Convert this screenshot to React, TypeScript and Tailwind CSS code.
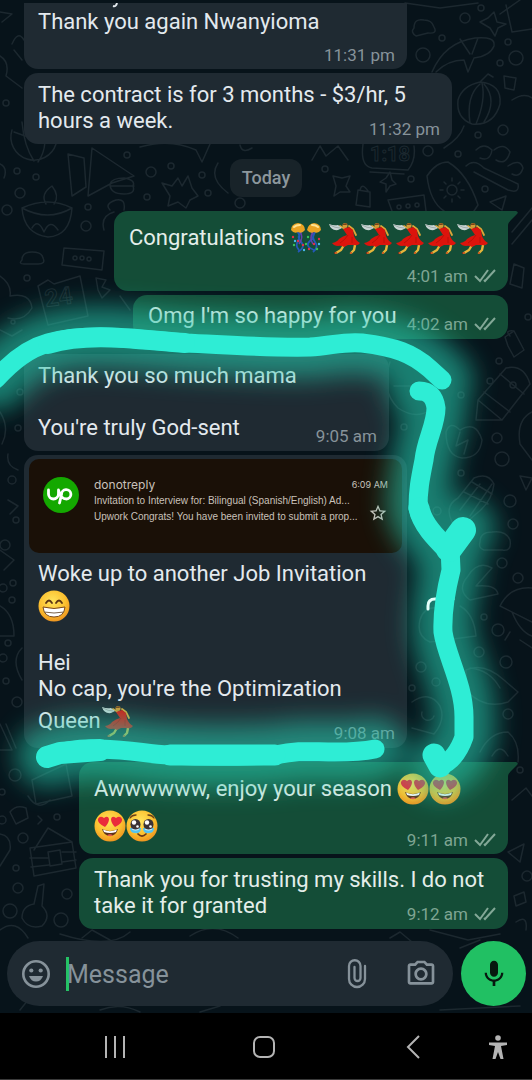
import type { ReactNode } from "react";
import { MdMic, MdOutlinePhotoCamera, MdStarBorder } from "react-icons/md";

function Dancer() {
  return (
    <svg viewBox="0 0 32 32" className="size-8 shrink-0" role="img" aria-label="dancer">
      <path d="M16 23 L13 28 L8 31 M27 23 L26 28 L23 31" fill="none" stroke="#e6b53a" strokeWidth="2.4" strokeLinecap="round" strokeLinejoin="round" />
      <path d="M12 4 L17 7 M21 4 L25 7 L28 13" fill="none" stroke="#dda637" strokeWidth="1.8" strokeLinecap="round" strokeLinejoin="round" />
      <path d="M1 2 Q6 4 10 3 L14 6 L10 8 Q3 9 1 2Z" fill="#c9d5d4" />
      <path d="M2 3 Q7 6 12 6" fill="none" stroke="#94a19e" strokeWidth="0.8" />
      <path d="M15 7 L21 5 L25 8 L26 14 Q28 19 32 21 Q30 24 26 23 L20 23 L16 25 Q13 23 10 24 Q6 24 4 21 Q9 20 11 17 Q15 14 19 13Z" fill="#dc140c" />
      <path d="M20 13 Q17 18 12 21 M24 15 L24 21" fill="none" stroke="#b00f08" strokeWidth="0.8" />
      <circle cx="17" cy="3.6" r="2.5" fill="#d69a35" />
      <path d="M14 3 Q16 0 20 2 L18 3Z" fill="#7a4318" />
      <path d="M6 31 L9 31 M22 31 L24 31" stroke="#b5120c" strokeWidth="1.2" />
    </svg>
  );
}

function Confetti() {
  return (
    <svg viewBox="0 0 32 32" className="size-8 shrink-0" role="img" aria-label="confetti ball">
      <path d="M7 9 Q11 14 8 19 T9 28 M12 9 Q6 15 11 20 T8 30 M21 9 Q26 14 20 19 T24 28 M26 9 Q21 15 25 20 T23 30" fill="none" stroke="#2458b8" strokeWidth="1.8" />
      <path d="M10 10 Q14 15 9 22 M23 10 Q19 16 23 22" fill="none" stroke="#6541a8" strokeWidth="1.6" />
      <path d="M1 8 Q1 2 8 1 Q15 2 15 8 Q12 12 8 10 Q4 12 1 8Z" fill="#eaa323" />
      <path d="M17 8 Q18 2 24 1 Q31 2 31 8 Q28 12 24 10 Q20 12 17 8Z" fill="#eaa323" />
      <path d="M4 5 Q6 3 10 3 M22 3 Q26 3 28 5" fill="none" stroke="#ffe391" strokeWidth="2" strokeLinecap="round" />
      <g fill="#e0304b"><circle cx="3" cy="15" r="1.2" /><circle cx="13" cy="23" r="1.2" /><circle cx="29" cy="17" r="1.2" /><circle cx="19" cy="27" r="1.2" /><circle cx="8" cy="19" r="1.2" /><circle cx="24" cy="22" r="1.2" /></g>
      <g fill="#39c15a"><circle cx="16" cy="22" r="1.2" /><circle cx="4" cy="23" r="1.2" /><circle cx="27" cy="27" r="1.2" /><circle cx="18" cy="15" r="1.2" /></g>
      <g fill="#49b9ea"><circle cx="5" cy="19" r="1.2" /><circle cx="29" cy="22" r="1.2" /><circle cx="14" cy="28" r="1.2" /></g>
    </svg>
  );
}

function Face({ id, label, children }: { id: string; label: string; children: ReactNode }) {
  return (
    <svg viewBox="0 0 32 32" className="size-8 shrink-0" role="img" aria-label={label}>
      <defs>
        <radialGradient id={id} cx="0.45" cy="0.35" r="0.65">
          <stop offset="0" stopColor="#ffe45c" />
          <stop offset="0.65" stopColor="#fbc02f" />
          <stop offset="1" stopColor="#ee9520" />
        </radialGradient>
      </defs>
      <circle cx="16" cy="16" r="15.5" fill={`url(#${id})`} />
      {children}
    </svg>
  );
}

function HeartEyes({ id }: { id: string }) {
  return (
    <Face id={id} label="heart eyes">
      <path d="M11 17 Q3 13 4 9 Q6 5 10 8 Q14 5 15 9 Q15 13 11 17Z" fill="#ea2c3b" />
      <path d="M21 17 Q17 13 17 9 Q18 5 22 8 Q26 5 28 9 Q29 13 21 17Z" fill="#ea2c3b" />
      <path d="M8 19 Q16 23 24 19 Q22 26 16 26 Q10 26 8 19Z" fill="#5f3218" />
      <path d="M9 19.500 Q16 23 23 19.500 L22 22 Q16 24 10 22Z" fill="#fff" />
      <path d="M13 25.500 Q16 23 19 25.500 Q16 27 13 25.500Z" fill="#e75a4e" />
    </Face>
  );
}

function Grin() {
  return (
    <Face id="grin" label="grin">
      <path d="M8 13 Q11 8 14 13 M18 13 Q21 8 24 13" fill="none" stroke="#5b3414" strokeWidth="1.8" strokeLinecap="round" />
      <path d="M5 17 Q16 20 27 17 Q26 27 16 27 Q6 27 5 17Z" fill="#fff" stroke="#7b4a1c" strokeWidth="1" />
      <path d="M6 22 Q16 24 26 22" fill="none" stroke="#7b6249" strokeWidth="1" />
    </Face>
  );
}

function HoldingTears() {
  return (
    <Face id="tears" label="holding back tears">
      <path d="M4 8 Q6 5 10 5 M22 5 Q26 5 28 8" fill="none" stroke="#6b4018" strokeWidth="1.300" strokeLinecap="round" />
      <path d="M4 18 H15 Q15 24 9 23 Q4 23 4 18Z M28 18 H17 Q17 24 23 23 Q28 23 28 18Z" fill="#54c3f0" />
      <ellipse cx="9.500" cy="14.500" rx="5" ry="5.500" fill="#3b3236" />
      <ellipse cx="22.500" cy="14.500" rx="5" ry="5.500" fill="#3b3236" />
      <g fill="#fff"><circle cx="8" cy="12.500" r="2.200" /><circle cx="21" cy="12.500" r="2.200" /><circle cx="11.500" cy="16.500" r="1.300" /><circle cx="24.500" cy="16.500" r="1.300" /></g>
      <path d="M6 19 Q9.500 21 13 19 M19 19 Q22.500 21 26 19" fill="none" stroke="#c7edfb" strokeWidth="1.200" />
      <path d="M12 24 Q16 28 20 24" fill="none" stroke="#6b3715" strokeWidth="1.700" strokeLinecap="round" />
    </Face>
  );
}

function Stamp({ time, read }: { time: string; read?: boolean }) {
  return (
    <div className={read ? "flex h-5 shrink-0 items-center gap-1.5 text-[17px] leading-5 text-[#7fa593]" : "flex h-5 shrink-0 items-center text-[17px] leading-5 text-[#87939a]"}>
      <time>{time}</time>
      {read && (
        <svg viewBox="0 0 22 14" className="h-3.5 w-[22px]" fill="none" stroke="#83a897" strokeWidth="2" role="img" aria-label="delivered">
          <path d="M1 7 L6 12 L14 1 M10 11 L11 12 L21 1" />
        </svg>
      )}
    </div>
  );
}

function Bubble({ mine, tail, className, children }: { mine?: boolean; tail?: boolean; className: string; children: ReactNode }) {
  const side = mine ? "mr-6 self-end bg-[#144d37] pl-[15px] pr-3 text-[#e4eeea]" : "ml-6 self-start bg-[#1f2a32] pl-3.5 pr-3 text-[#e3e9ee]";
  return (
    <li className={`relative flex flex-col text-[22px] leading-[26px] ${side} ${className}`}>
      {tail && (
        <svg viewBox="0 0 10 14" className="absolute -right-2.5 top-0 h-3.5 w-2.5" aria-hidden="true">
          <path d="M0 0 H8 Q11 1 9 3 L3 9 Q0 12 0 14Z" fill="#144d37" />
        </svg>
      )}
      {children}
    </li>
  );
}

function EmojiLine({ children }: { children: ReactNode }) {
  return <div className="flex h-[37px] items-center whitespace-pre">{children}</div>;
}

const dots: [number, number, number][] = [
  [465, 18, 5], [481, 8, 3], [442, 38, 3], [423, 55, 7], [508, 42, 3], [516, 58, 7], [500, 63, 3], [503, 130, 5], [478, 135, 3], [428, 151, 5], [458, 154, 3],
  [17, 171, 3], [36, 177, 3], [20, 193, 5], [127, 155, 3], [151, 172, 5], [171, 166, 3], [147, 197, 3], [202, 175, 3], [208, 193, 3], [240, 203, 5], [325, 169, 3], [411, 179, 3], [485, 189, 3],
  [88, 207, 3], [86, 226, 5], [7, 210, 5], [27, 278, 3], [13, 322, 2], [6, 103, 3], [13, 583, 3], [3, 588, 4], [12, 600, 3], [8, 643, 3], [3, 658, 4], [6, 681, 3], [17, 702, 5], [20, 392, 3], [18, 428, 3],
  [499, 361, 3], [461, 395, 3], [497, 438, 5], [502, 459, 7], [461, 473, 3], [404, 427, 3], [510, 501, 6], [513, 524, 5], [437, 511, 4],
  [502, 563, 5], [518, 578, 5], [484, 617, 3], [498, 630, 6], [479, 652, 5], [506, 662, 6], [421, 667, 5], [436, 682, 4], [412, 688, 3], [508, 714, 5],
  [15, 775, 6], [57, 817, 3], [23, 838, 5], [16, 868, 3], [18, 888, 5], [67, 894, 5], [10, 911, 7], [61, 920, 7], [2, 820, 4], [528, 317, 3], [527, 876, 5], [2, 792, 3],
  [520, 770, 3], [513, 385, 3], [490, 381, 3], [12, 480, 4], [16, 520, 3], [5, 545, 5],
];

const scribbles = [
  "M405 3 L440 8 L478 3 M506 5 L512 32 L532 29 M480 22 L488 18 L494 12 L497 22 L506 24 L498 28 L495 36 L490 28Z",
  "M414 28 Q414 18 424 20 Q432 20 434 27 Q438 34 428 33 L416 36 Q410 32 414 28Z",
  "M432 72 Q445 42 475 38 Q496 36 494 46 Q490 56 474 58 L468 72 L464 60 Q448 60 436 72 M460 39 L470 54 M478 38 L472 54",
  "M480 82 Q502 84 500 104 Q494 126 472 124 Q456 118 458 100 Q462 86 480 82Z M480 84 Q466 96 470 123 M482 83 Q486 100 476 124 M484 84 Q498 100 484 122 M480 82 L488 74 L493 77",
  "M504 76 L516 78 L514 90 L505 88Z M512 100 Q524 92 532 98 M444 148 Q460 138 464 126",
  "M12 130 A22 22 0 1 0 56 144 M14 132 Q34 140 56 142 M22 122 Q24 146 34 161 M45 142 Q44 154 38 162",
  "M68 154 L72 196 L86 187 L84 158Z M92 148 L134 176 L112 183 L88 196Z M110 184 Q112 178 124 178 Q136 180 133 186 Q136 194 124 194 Q110 194 110 184Z M110 186 H134",
  "M162 183 L172 186 L178 178 L182 186 L188 176 L192 188 L198 196 L190 200 L186 208 L178 202 L168 206 L170 196Z",
  "M22 208 Q48 196 72 208 Q70 236 48 237 Q24 234 22 208Z M22 208 Q48 222 72 208 M46 204 Q40 194 52 186 Q60 196 54 204 M32 228 Q38 218 44 232 Q50 218 58 230",
  "M64 248 L104 251 L102 270 L62 265Z M22 260 Q22 252 32 252 Q42 252 43 258 Q46 264 38 264 H24 Q18 264 22 260Z",
  "M38 286 L48 280 L54 284 L80 276 L88 316 L48 325 L42 302Z M96 278 L106 280 L102 287 L110 290 L102 298 L98 290Z",
  "M0 276 Q12 284 10 296 Q30 292 32 308 Q24 322 8 318 M110 210 Q104 204 116 200 Q126 198 124 210 M104 230 Q100 216 114 212",
  "M140 147 Q170 138 196 150 L202 162 L210 144 M240 145 Q242 154 252 148 M312 160 L320 146 L326 156 L338 146 L348 160",
  "M363 144 Q360 166 372 168 L408 170 Q416 160 414 146 M370 172 L404 174 M218 163 Q208 178 228 193",
  "M333 176 L342 178 L350 176 L346 186 L350 192 L340 192 L334 196 L336 186Z M358 190 L370 192 L370 207 L356 205Z M360 190 Q362 182 368 191 M380 182 L386 178 L390 172 L392 180 L396 184 L390 186 L386 192 L386 184Z",
  "M388 200 L424 195 L426 211 M388 200 L392 211 M427 176 Q436 162 448 162 Q468 174 478 205 L474 211 M427 176 Q430 202 444 211",
  "M466 166 Q474 158 484 168 L518 184 Q520 194 508 190 L474 172 M476 150 Q484 142 492 150 Q490 162 480 158 M494 150 Q504 142 510 152 Q506 166 496 160 M508 166 Q520 158 523 168 Q520 178 512 174",
  "M490 202 L506 196 L502 210Z M512 232 L532 208 M512 244 L532 220 M514 264 L524 268 L522 288 L510 284Z M0 164 Q8 168 4 178 M0 56 Q10 62 6 76 L22 88 M0 12 L12 14 L2 22 M12 44 Q18 30 24 40 M14 50 L22 60",
  "M505 337 L514 331 L524 350 L514 357 L508 346Z M510 336 Q504 330 514 331 M478 400 L506 368 Q524 364 530 384 L502 420 L476 420Z M478 400 L502 420 M484 392 L510 412 M500 374 L524 394 M532 412 Q516 420 520 444 L532 460",
  "M446 432 Q450 420 460 430 Q476 420 482 440 Q480 458 462 458 Q446 456 446 432Z M460 432 L456 446 L468 440 L464 454 M390 362 Q380 390 398 408 Q416 420 430 410 M394 386 H420",
  "M452 522 Q444 506 458 498 L474 478 Q488 472 494 484 Q492 502 476 514 Q462 528 452 522 M464 492 L488 504 M472 482 L492 494 M460 510 L480 484 M470 516 L492 484 M480 542 Q480 532 492 532 Q506 530 510 540 Q512 552 502 550 H484 Q478 548 480 542Z M520 476 L532 478 L526 490Z",
  "M468 576 Q478 560 492 568 L476 586 Q496 584 498 594 L470 600 Q456 590 468 576Z M500 606 Q510 586 532 588 M500 606 L532 622 M512 612 Q520 632 532 636 M520 640 L532 648 M420 620 Q424 606 438 608 M460 606 Q474 614 476 636 L430 642 Q416 636 420 620",
  "M466 670 Q484 662 504 680 L518 692 L508 702 Q484 710 466 690Z M470 668 Q490 670 500 688 M412 702 Q430 690 440 706 Q446 720 434 734 L412 728 M422 712 A6 6 0 1 0 434 716 M480 752 Q490 732 508 732 Q520 742 518 762 M492 756 Q500 742 508 756",
  "M32 780 L66 764 L72 796 L36 804Z M28 796 Q38 812 50 800 M10 812 Q16 804 26 808 L28 818 L16 824Z M34 850 L48 828 L72 842 M30 848 L72 842 L76 868 L34 876Z M48 852 L60 850 L62 864 L50 866Z M38 816 L42 820 L38 824 M30 858 H48 M62 852 H76 M31 867 L49 865 M62 862 L76 860",
  "M38 886 L44 884 L42 906 Q52 916 42 926 Q28 930 22 918 Q22 906 34 904Z M0 834 Q12 836 10 850 L0 866 M0 930 Q16 918 28 938 M82 938 L92 930 L110 940 M512 800 L526 788 L532 796 M508 852 L524 844 L520 862Z M514 896 L524 892 L526 902 L516 906Z M516 922 Q528 914 526 930",
  "M60 934 Q110 950 130 932 M190 936 Q214 920 238 938 M390 938 L400 932 L412 942 M430 930 L468 940 L500 934 M460 948 L480 940 M0 550 L14 560 L4 570 M0 606 Q14 614 14 636 H0 M22 648 Q10 660 22 680 M0 724 L12 750 H0 M6 724 L16 748",
  "M0 412 Q10 428 2 444 M18 470 Q6 466 8 454 M8 500 L18 506 L10 514 M0 330 L12 336 L22 330 M130 310 L120 296 M500 14 L520 0 M505 640 L510 632 M20 1010 L28 1000 M100 1010 Q120 1002 140 1012 M200 1012 L220 1006 M440 1010 L520 1006",
];

function Wallpaper() {
  return (
    <svg viewBox="0 0 532 1080" preserveAspectRatio="xMidYMin slice" className="absolute inset-0 size-full" fill="none" stroke="#1c282f" strokeWidth="1.500" strokeLinejoin="round" strokeLinecap="round" aria-hidden="true">
      {scribbles.map((d) => <path key={d} d={d} />)}
      {dots.map(([x, y, r]) => <circle key={`${x}-${y}`} cx={x} cy={y} r={r} />)}
      <circle cx="452" cy="190" r="5" />
      <path d="M452 181 V178 M452 199 V202 M443 190 H440 M461 190 H464 M446 184 L444 182 M458 196 L460 198 M446 196 L444 198 M458 184 L460 182" />
      <circle cx="75" cy="258" r="2" /><circle cx="82" cy="258" r="2" /><circle cx="89" cy="259" r="2" />
      <circle cx="399" cy="207" r="2" /><circle cx="408" cy="206" r="2" /><circle cx="417" cy="205" r="2" />
      <g fontFamily="Roboto, sans-serif" fontWeight="700" fontSize="20" strokeWidth="1">
        <text x="370" y="161">1:18</text>
        <text x="46" y="307" transform="rotate(-8 46 307)" fontSize="24">24</text>
      </g>
    </svg>
  );
}

const strokes = [
  "M-4 379 Q22 350 48 343 C90 331 140 340 185 343 C230 345 270 348 310 347 C330 346 345 341 362 343 C395 347 412 353 430 369 L442 380",
  "M419 391 Q434 391 436 408 C436 425 426 440 424 460 C420 480 418 490 418 508 C422 524 436 538 448 550 L464 528",
  "M450 548 L451 570 C446 590 442 610 443 632 C446 655 464 685 464 717 V737 Q456 760 440 766",
  "M47 756 Q75 747 100 749 C135 750 145 754 170 755 C210 757 250 756 275 755 C300 750 310 752 335 752 Q360 752 375 749",
];

function Marker() {
  return (
    <svg viewBox="0 0 532 1080" preserveAspectRatio="xMidYMin slice" className="pointer-events-none absolute inset-0 size-full" fill="none" strokeLinecap="round" strokeLinejoin="round" aria-hidden="true">
      <defs>
        <filter id="glow" filterUnits="userSpaceOnUse" x="-80" y="240" width="700" height="640">
          <feGaussianBlur stdDeviation="13" />
        </filter>
      </defs>
      <g filter="url(#glow)" stroke="#27c8ac" opacity="0.6">
        {strokes.map((d) => <path key={d} d={d} strokeWidth="62" />)}
      </g>
      <path d="M428 609 V606 Q428 599 435 599 H440 M449 600 L453 599" stroke="#e5fffa" strokeWidth="3" />
      <g stroke="#2eedd5">
        {strokes.map((d) => <path key={d} d={d} strokeWidth="19" />)}
        <path d="M48 344 C90 331 140 340 185 343" strokeWidth="20" />
        <path d="M419 508 C422 524 436 538 448 550" strokeWidth="21" />
        <path d="M449 549 L463 530" strokeWidth="26" />
        <path d="M434 755 L440 766" strokeWidth="23" />
        <path d="M47 757 L60 753 L100 750" strokeWidth="22" />
        <path d="M170 755 L275 755" strokeWidth="21" />
      </g>
    </svg>
  );
}

function MailPreview() {
  return (
    <div className="-ml-[9px] -mr-[7px] flex h-[94px] items-start gap-[15px] overflow-hidden rounded-[10px] bg-[#1a1007] pl-3.5 pr-3.5 pt-[18px] font-['Inter',sans-serif] text-[#c9c1ba]">
      <svg viewBox="0 0 36 36" className="size-9 shrink-0" role="img" aria-label="Upwork">
        <circle cx="18" cy="18" r="18" fill="#14a800" />
        <path d="M5.500 13 V17 A5 5 0 0 0 15.500 17 V13 C17 19 19 22 23.500 22 A4.700 4.700 0 1 0 18.500 17.500 L16.500 26" fill="none" stroke="#fff" strokeWidth="2.800" strokeLinecap="round" strokeLinejoin="round" />
      </svg>
      <div className="min-w-0 flex-1 whitespace-nowrap text-[10px] leading-4">
        <div className="flex justify-between">
          <span className="text-[12px]">donotreply</span>
          <span className="text-[9px]">6:09 AM</span>
        </div>
        <div className="flex items-end justify-between">
          <div className="font-['Liberation_Sans',sans-serif]">
            <p>Invitation to Interview for: Bilingual (Spanish/English) Ad...</p>
            <p>Upwork Congrats! You have been invited to submit a prop...</p>
          </div>
          <MdStarBorder className="mb-0.5 size-5 shrink-0" />
        </div>
      </div>
    </div>
  );
}

export default function App() {
  return (
    <div className="relative flex min-h-screen flex-col overflow-hidden bg-[#07131a] font-['Roboto',sans-serif]">
      <Wallpaper />
      <main className="relative flex-1 pt-[3px]">
        <ul className="flex flex-col">
          <Bubble className="w-[383px] rounded-b-[14px] pb-1 pt-1.5">
            <svg viewBox="0 0 8 5" className="absolute left-[88px] top-0 h-[5px] w-2" aria-hidden="true">
              <path d="M1 3 Q4 4 5 0" fill="none" stroke="#e3e9ee" strokeWidth="2" />
            </svg>
            <p>Thank you again Nwanyioma</p>
            <div className="mt-2.5 flex justify-end"><Stamp time="11:31 pm" /></div>
          </Bubble>
          <Bubble className="mt-1 w-[428px] rounded-[14px] pb-[5px] pt-[9px]">
            <p>The contract is for 3 months - $3/hr, 5<br />hours a week.</p>
            <div className="-mt-[15px] flex justify-end"><Stamp time="11:32 pm" /></div>
          </Bubble>
          <li className="mt-[15px] self-center rounded-[12px] bg-[#182329] px-3 py-1.5 text-[18px] font-medium leading-[26px] text-[#8c979d]">Today</li>
          <Bubble mine tail className="mt-3.5 w-[394px] rounded-[14px] rounded-tr-none pb-[5px] pt-2">
            <EmojiLine>
              <span>Congratulations </span><Confetti /><span> </span>
              <Dancer /><Dancer /><Dancer /><Dancer /><Dancer />
            </EmojiLine>
            <div className="mt-2.5 flex justify-end"><Stamp time="4:01 am" read /></div>
          </Bubble>
          <Bubble mine className="mt-1 w-[375px] rounded-[14px] pb-[5px] pt-2">
            <p>Omg I'm so happy for you</p>
            <div className="-mt-[15px] flex justify-end"><Stamp time="4:02 am" read /></div>
          </Bubble>
          <Bubble className="mt-[15px] w-[365px] rounded-[14px] pb-[5px] pt-[9px]">
            <p>Thank you so much mama<br /><br />You're truly God-sent</p>
            <div className="-mt-[15px] flex justify-end"><Stamp time="9:05 am" /></div>
          </Bubble>
          <Bubble className="mt-1 w-[383px] rounded-[14px] pb-[5px] pt-1">
            <MailPreview />
            <p className="mt-2">Woke up to another Job Invitation</p>
            <EmojiLine><Grin /></EmojiLine>
            <p><br />Hei<br />No cap, you're the Optimization</p>
            <EmojiLine><span>Queen</span><Dancer /></EmojiLine>
            <div className="-mt-4 flex justify-end"><Stamp time="9:08 am" /></div>
          </Bubble>
          <Bubble mine tail className="mt-3.5 w-[429px] rounded-[14px] rounded-tr-none pb-1 pt-2">
            <EmojiLine><span>Awwwwww, enjoy your season </span><HeartEyes id="he1" /><HeartEyes id="he2" /></EmojiLine>
            <EmojiLine><HeartEyes id="he3" /><HoldingTears /></EmojiLine>
            <div className="-mt-3.5 flex justify-end"><Stamp time="9:11 am" read /></div>
          </Bubble>
          <Bubble mine className="mt-1 w-[429px] rounded-[14px] pb-[5px] pt-[9px]">
            <p>Thank you for trusting my skills. I do not<br />take it for granted</p>
            <div className="-mt-[15px] flex justify-end"><Stamp time="9:12 am" read /></div>
          </Bubble>
        </ul>
      </main>
      <form className="relative flex items-center gap-2 pb-[7px] pl-[7px] pr-1.5 pt-2.5">
        <div className="flex h-[65px] min-w-0 flex-1 items-center rounded-full bg-[#1f2a32] pl-3.5 pr-4 text-[#86929a]">
          <button type="button" aria-label="Emoji">
            <svg viewBox="0 0 30 30" className="size-[30px]" aria-hidden="true">
              <circle cx="15" cy="15" r="12.700" fill="none" stroke="currentColor" strokeWidth="2.600" />
              <circle cx="10.300" cy="11.500" r="2.100" fill="currentColor" />
              <circle cx="19.700" cy="11.500" r="2.100" fill="currentColor" />
              <path d="M8 17 H22 Q20 22.500 15 22.500 Q10 22.500 8 17Z" fill="currentColor" />
            </svg>
          </button>
          <span className="ml-[15px] h-[34px] w-[3px] shrink-0 bg-[#25c265]" />
          <input aria-label="Message" placeholder="Message" className="-ml-0.5 h-10 min-w-0 flex-1 bg-transparent pt-0.5 text-[25px] outline-none placeholder:text-[#86929a] placeholder:opacity-100" />
          <button type="button" aria-label="Attach">
            <svg viewBox="0 0 20 30" className="h-[30px] w-5" fill="none" stroke="currentColor" strokeWidth="2.300" strokeLinecap="round" aria-hidden="true">
              <path d="M18 7 V20 A8 8 0 0 1 2 20 V7 A5.500 5.500 0 0 1 13.500 7 V19 A3 3 0 0 1 7.500 19 V8" />
            </svg>
          </button>
          <button type="button" aria-label="Camera" className="ml-[38px]"><MdOutlinePhotoCamera className="size-8" /></button>
        </div>
        <button type="button" aria-label="Record voice message" className="flex size-[65px] shrink-0 items-center justify-center rounded-full bg-[#21c063] text-[#07180f]">
          <MdMic className="size-8" />
        </button>
      </form>
      <nav className="relative flex h-[67px] items-center border-b border-[#3a3a3a] bg-black pl-10 pr-6 pt-0.5 text-[#b4b4b4]">
        <button type="button" aria-label="Recent apps" className="flex flex-1 justify-center">
          <svg viewBox="0 0 22 22" className="size-[22px]" stroke="currentColor" strokeWidth="2" aria-hidden="true"><path d="M2 0 V22 M11 0 V22 M20 0 V22" /></svg>
        </button>
        <button type="button" aria-label="Home" className="flex flex-1 justify-center">
          <svg viewBox="0 0 22 22" className="size-[22px]" fill="none" stroke="currentColor" strokeWidth="2" aria-hidden="true"><rect x="1" y="1" width="20" height="20" rx="6" /></svg>
        </button>
        <button type="button" aria-label="Back" className="flex flex-1 justify-center">
          <svg viewBox="0 0 14 24" className="h-6 w-3.5" fill="none" stroke="currentColor" strokeWidth="2" aria-hidden="true"><path d="M13 1 L2 12 L13 23" /></svg>
        </button>
        <button type="button" aria-label="Accessibility">
          <svg viewBox="0 0 20 24" className="h-6 w-5" fill="currentColor" aria-hidden="true">
            <circle cx="10" cy="3" r="2.800" />
            <path d="M1 7.500 H19 V10 L13 11 L15.500 24 H12.500 L10 17 L7.500 24 H4.500 L7 11 L1 10Z" />
          </svg>
        </button>
      </nav>
      <Marker />
    </div>
  );
}
